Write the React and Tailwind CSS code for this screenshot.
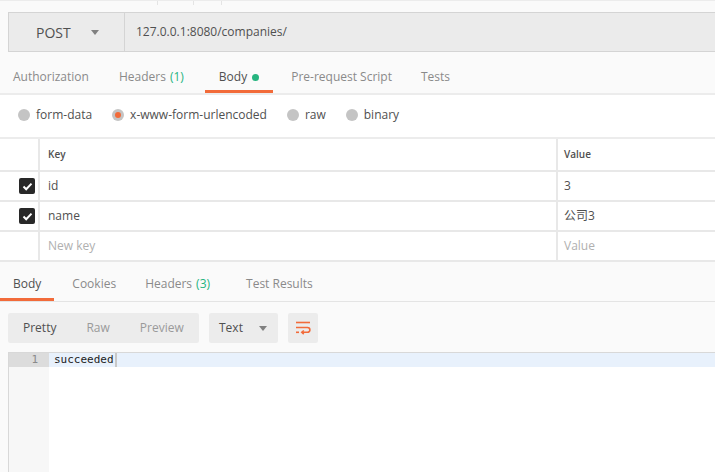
import React from 'react';

const font = { fontFamily: '"Open Sans", "Noto Sans CJK SC", sans-serif' };

function Checkbox() {
  return (
    <div className="flex h-[16px] w-[16px] items-center justify-center rounded-[2px] bg-[#282828]">
      <svg width="11" height="9" viewBox="0 0 11 9">
        <path d="M1.5 4.5 L4.2 7.2 L9.5 1.6" fill="none" stroke="#fff" strokeWidth="2" />
      </svg>
    </div>
  );
}

function Radio({ label, active }) {
  return (
    <div className="flex items-center gap-[6px]">
      <div className="flex h-[12px] w-[12px] items-center justify-center rounded-full bg-[#c4c4c4]">
        {active ? <div className="h-[6px] w-[6px] rounded-full bg-[#f26b3a]" /> : null}
      </div>
      <span className="text-[12px] text-[#505050]">{label}</span>
    </div>
  );
}

function Row({ check, k, v, placeholder }) {
  return (
    <div className="flex h-[30px] border-b-2 border-[#e8e8e8]">
      <div className="flex w-[38px] items-center justify-end pr-[3px]">{check ? <Checkbox /> : null}</div>
      <div className="w-[2px] bg-[#e8e8e8]" />
      <div className={`flex flex-1 items-center pl-[8px] text-[12px] ${placeholder ? 'text-[#b0b0b0]' : 'text-[#505050]'}`}>{k}</div>
      <div className="w-[2px] bg-[#e8e8e8]" />
      <div className={`flex w-[157px] items-center pl-[6px] text-[12px] ${placeholder ? 'text-[#b0b0b0]' : 'text-[#505050]'}`}>{v}</div>
    </div>
  );
}

const requestTabs = [
  { label: 'Authorization', cls: 'ml-[-1px]' },
  { label: 'Headers', count: '(1)', cls: 'ml-[2px]' },
  { label: 'Body', dot: true, active: true, cls: 'ml-[7px]' },
  { label: 'Pre-request Script', cls: 'ml-[4px]' },
  { label: 'Tests', cls: 'ml-[1px]' },
];

const responseTabs = [
  { label: 'Body', active: true, cls: 'px-[13px]' },
  { label: 'Cookies', cls: 'ml-[2px] px-[16px]' },
  { label: 'Headers', count: '(3)', cls: 'ml-[-3px] px-[16px]' },
  { label: 'Test Results', cls: 'ml-[4px] px-[16px]' },
];

export default function App() {
  return (
    <div className="h-[472px] w-[715px] overflow-hidden bg-[#fafafa]" style={font}>
      {/* cut-off strip above */}
      <div className="relative h-[12px] border-t border-[#ececec]">
        <div className="absolute left-[157px] top-0 h-[4px] w-px bg-[#e4e4e4]" />
        <div className="absolute left-[193px] top-0 h-[4px] w-px bg-[#e4e4e4]" />
        <div className="absolute left-[221px] top-0 h-[4px] w-px bg-[#e4e4e4]" />
      </div>

      {/* url bar */}
      <div className="ml-[8px] flex h-[40px] border border-r-0 border-[#d4d4d4] bg-[#ebebeb]">
        <div className="flex w-[116px] items-center border-r border-[#d4d4d4] pl-[27px]">
          <span className="text-[14px] text-[#505050]">POST</span>
          <svg className="ml-[20px]" width="8" height="5" viewBox="0 0 8 5">
            <path d="M0 0 H8 L4 5 Z" fill="#808080" />
          </svg>
        </div>
        <div className="flex items-center pl-[11px] text-[12px] text-[#505050]">127.0.0.1:8080/companies/</div>
      </div>

      {/* request tabs */}
      <div className="mt-[8px] flex h-[35px] border-b-2 border-[#ececec] pt-[1px] text-[12px]">
        {requestTabs.map((t) => (
          <div
            key={t.label}
            className={`flex items-center px-[14px] ${t.cls} ${t.active ? 'border-b-[3px] border-[#f26b3a] pt-[3px] text-[#505050]' : 'text-[#8a8a8a]'}`}
          >
            {t.label}
            {t.count ? <span className="ml-[4px] text-[#26b47f]">{t.count}</span> : null}
            {t.dot ? <span className="ml-[5px] h-[7px] w-[7px] rounded-full bg-[#26b47f]" /> : null}
          </div>
        ))}
      </div>

      {/* body types */}
      <div className="flex h-[42px] items-center gap-[20px] bg-white pl-[18px] pb-[2px]">
        <Radio label="form-data" />
        <Radio label="x-www-form-urlencoded" active />
        <Radio label="raw" />
        <Radio label="binary" />
      </div>

      {/* params table */}
      <div className="border-t-2 border-[#ececec] bg-white">
        <div className="flex h-[33px] border-b-2 border-[#e8e8e8]">
          <div className="w-[38px]" />
          <div className="w-[2px] bg-[#e8e8e8]" />
          <div className="flex flex-1 items-center pl-[8px] text-[10px] font-semibold text-[#505050]">Key</div>
          <div className="w-[2px] bg-[#e8e8e8]" />
          <div className="flex w-[157px] items-center pl-[6px] text-[10px] font-semibold text-[#505050]">Value</div>
        </div>
        <Row check k="id" v="3" />
        <Row check k="name" v="公司3" />
        <Row k="New key" v="Value" placeholder />
      </div>

      {/* response tabs */}
      <div className="mt-[4px] flex h-[36px] border-b border-[#e4e4e4] text-[12px]">
        {responseTabs.map((t) => (
          <div
            key={t.label}
            className={`flex items-center ${t.cls} ${t.active ? 'border-b-[3px] border-[#f26b3a] pt-[3px] text-[#505050]' : 'text-[#8a8a8a]'}`}
          >
            {t.label}
            {t.count ? <span className="ml-[4px] text-[#26b47f]">{t.count}</span> : null}
          </div>
        ))}
      </div>

      {/* response toolbar */}
      <div className="mt-[11px] flex h-[30px] items-stretch gap-[10px] pl-[8px] text-[12px]">
        <div className="flex w-[191px] items-center rounded-[2px] bg-[#ececec]">
          <span className="pl-[15px] text-[#505050]">Pretty</span>
          <span className="pl-[30px] text-[#9a9a9a]">Raw</span>
          <span className="pl-[30px] text-[#9a9a9a]">Preview</span>
        </div>
        <div className="flex w-[69px] items-center rounded-[2px] bg-[#ececec] pl-[10px] text-[#505050]">
          Text
          <svg className="ml-[16px]" width="8" height="5" viewBox="0 0 8 5">
            <path d="M0 0 H8 L4 5 Z" fill="#808080" />
          </svg>
        </div>
        <div className="flex w-[30px] items-center justify-center rounded-[2px] bg-[#ececec]">
          <svg width="16" height="14" viewBox="0 0 16 14" fill="none" stroke="#f26b3a" strokeWidth="1.6">
            <path d="M1 1.5 H15" />
            <path d="M1 6.5 H12.5 A2.4 2.4 0 0 1 12.5 11.3 H7" />
            <path d="M8.8 9.5 L6.8 11.3 L8.8 13.1" />
            <path d="M1 11.3 H4" />
          </svg>
        </div>
      </div>

      {/* editor */}
      <div className="ml-[8px] mt-[9px] flex h-[200px] border-t border-l border-[#d8d8d8] bg-white">
        <div className="w-[40px] bg-[#f7f7f7]">
          <div className="flex h-[14px] items-center justify-end bg-[#dcdcdc] pr-[11px] text-[11px] text-[#8a8a8a]" style={{ fontFamily: '"DejaVu Sans Mono", monospace' }}>1</div>
        </div>
        <div className="flex-1">
          <div className="flex h-[14px] items-center bg-[#e8f1fc] pl-[5px] text-[11px] text-[#222]" style={{ fontFamily: '"DejaVu Sans Mono", monospace' }}>
            succeeded
            <span className="ml-[1px] h-[14px] w-[2px] bg-[#c8c8c8]" />
          </div>
        </div>
      </div>
    </div>
  );
}
